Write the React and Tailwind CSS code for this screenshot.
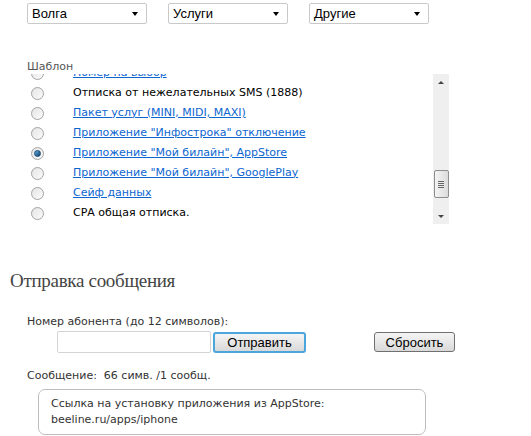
import { useState } from "react";

const rows = [
  { label: "Номер на выбор", link: true },
  { label: "Отписка от нежелательных SMS (1888)", link: false },
  { label: "Пакет услуг (MINI, MIDI, MAXI)", link: true },
  { label: 'Приложение "Инфострока" отключение', link: true },
  { label: 'Приложение "Мой билайн", AppStore', link: true },
  { label: 'Приложение "Мой билайн", GooglePlay', link: true },
  { label: "Сейф данных", link: true },
  { label: "СРА общая отписка.", link: false },
];

function Select({ value }) {
  return (
    <div className="w-[120px] h-[21px] border border-[#c9c9c9] rounded-[2px] bg-white flex items-center justify-between pl-[4px] pr-[8px] text-[13px] text-black font-['Liberation_Sans',Arial,sans-serif]">
      <span>{value}</span>
      <span className="w-0 h-0 border-l-[3.5px] border-r-[3.5px] border-t-[4px] border-l-transparent border-r-transparent border-t-black" />
    </div>
  );
}

function Radio({ checked }) {
  return (
    <span className="w-[13px] h-[13px] rounded-full border border-[#a3a3a3] bg-gradient-to-br from-[#e4e4e4] to-[#fbfbfb] flex items-center justify-center shrink-0">
      {checked && <span className="w-[7px] h-[7px] rounded-full bg-gradient-to-br from-[#5fb3e8] to-[#10406a] border border-[#1c4b72]" />}
    </span>
  );
}

function Scrollbar() {
  return (
    <div className="w-[16px] bg-[#efefef] flex flex-col items-center">
      <div className="h-[16px] flex items-center justify-center">
        <span className="w-0 h-0 border-l-[3px] border-r-[3px] border-b-[3px] border-l-transparent border-r-transparent border-b-[#444]" />
      </div>
      <div className="h-[80px]" />
      <div className="w-[15px] h-[28px] border border-[#8e8e8e] rounded-[2px] bg-gradient-to-r from-[#f4f4f4] to-[#dcdcdc] flex flex-col items-center justify-center gap-[1px]">
        <span className="w-[6px] h-[1px] bg-[#666]" />
        <span className="w-[6px] h-[1px] bg-[#666]" />
        <span className="w-[6px] h-[1px] bg-[#666]" />
        <span className="w-[6px] h-[1px] bg-[#666]" />
      </div>
      <div className="flex-1" />
      <div className="h-[16px] flex items-center justify-center">
        <span className="w-0 h-0 border-l-[3px] border-r-[3px] border-t-[3px] border-l-transparent border-r-transparent border-t-[#444]" />
      </div>
    </div>
  );
}

export default function App() {
  const [selected] = useState(4);

  return (
    <div className="w-[531px] h-[436px] bg-white overflow-hidden font-['DejaVu_Sans',Verdana,sans-serif] text-[11px] text-[#333]">
      {/* filters */}
      <div className="pt-[3px] pl-[27px] flex gap-[21px]">
        <Select value="Волга" />
        <Select value="Услуги" />
        <Select value="Другие" />
      </div>

      {/* template list */}
      <div className="mt-[36px] pl-[27px] h-[14px] leading-[14px] text-[#555] relative z-10">Шаблон</div>
      <div className="ml-[27px] w-[422px] h-[150px] flex">
        <div className="flex-1 overflow-hidden">
          <div className="-mt-[11px]">
            {rows.map((r, i) => (
              <div key={i} className="h-[20px] flex items-center pl-[4px] gap-[29px]">
                <Radio checked={i === selected} />
                {r.link ? (
                  <a className="text-[#0d66d0] underline whitespace-nowrap">{r.label}</a>
                ) : (
                  <span className="text-black whitespace-nowrap">{r.label}</span>
                )}
              </div>
            ))}
          </div>
        </div>
        <Scrollbar />
      </div>

      {/* send form */}
      <h2 className="mt-[45px] pl-[10px] text-[19px] leading-[24px] tracking-[-0.3px] text-[#444] font-['Liberation_Serif',serif]">Отправка сообщения</h2>

      <div className="mt-[22px] pl-[27px] leading-[14px]">Номер абонента (до 12 символов):</div>
      <div className="mt-[2px] pl-[57px] flex items-center">
        <div className="w-[154px] h-[22px] border border-[#d4d4d4] rounded-[2px] bg-white" />
        <button className="ml-[2px] w-[93px] h-[21px] rounded-[3px] border-2 border-[#4ba6dd] bg-gradient-to-b from-[#f5f5f5] to-[#d9d9d9] text-[13px] text-black font-['Liberation_Sans',Arial,sans-serif] leading-none">
          Отправить
        </button>
        <button className="ml-[68px] w-[81px] h-[20px] rounded-[3px] border border-[#707070] bg-gradient-to-b from-[#f5f5f5] to-[#d9d9d9] text-[13px] text-black font-['Liberation_Sans',Arial,sans-serif] leading-none">
          Сбросить
        </button>
      </div>

      <div className="mt-[16px] pl-[27px] leading-[14px]">Сообщение:&nbsp; 66 симв. /1 сообщ.</div>
      <div className="mt-[6px] ml-[38px] w-[388px] h-[46px] border border-[#bdbdbd] rounded-[7px] pl-[12px] pt-[6px] leading-[16px]">
        Ссылка на установку приложения из AppStore:
        <br />
        beeline.ru/apps/iphone
      </div>
    </div>
  );
}
